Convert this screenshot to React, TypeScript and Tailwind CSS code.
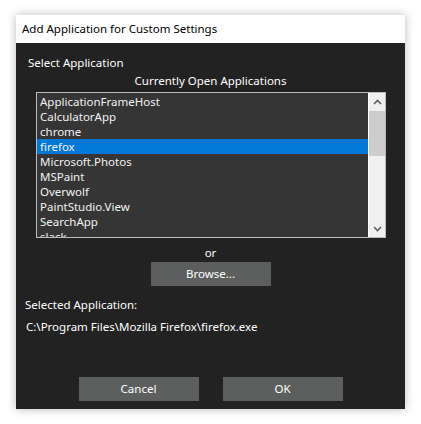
import React from 'react';

const apps = [
  'ApplicationFrameHost',
  'CalculatorApp',
  'chrome',
  'firefox',
  'Microsoft.Photos',
  'MSPaint',
  'Overwolf',
  'PaintStudio.View',
  'SearchApp',
  'slack',
  'Spotify',
];

function Chevron({ down }: { down?: boolean }) {
  return (
    <svg width="9" height="6" viewBox="0 0 9 6" className={down ? 'rotate-180' : ''} aria-hidden="true">
      <path d="M1 5 L4.5 1.5 L8 5" fill="none" stroke="#606060" strokeWidth="1.6" />
    </svg>
  );
}

function Button({ children }: { children: React.ReactNode }) {
  return (
    <button
      type="button"
      className="w-[120px] h-[24px] bg-[#5c5f5d] text-white text-[11.5px] leading-[24px] text-center"
    >
      {children}
    </button>
  );
}

export default function App() {
  const selected = 'firefox';

  return (
    <div
      className="min-h-[424px] bg-white pt-[15px] pl-[16px]"
      style={{ fontFamily: '"Noto Sans", sans-serif' }}
    >
      <div className="w-[389px] shadow-[0_0_9px_rgba(0,0,0,0.28)]">
        <div className="h-[28px] bg-white flex items-center pl-[6px] text-[11.5px] text-black">
          Add Application for Custom Settings
        </div>

        <div className="h-[366px] bg-[#222222] text-white text-[11.5px] leading-[15px] flex flex-col">
          <div className="mt-[12px] pl-[12px]">Select Application</div>
          <div className="mt-[3px] text-center">Currently Open Applications</div>

          <div className="mt-[4px] ml-[20px] w-[350px] h-[146px] border border-[#bcbcbc] bg-[#353535] flex">
            <div className="flex-1 overflow-hidden pt-[1px]">
              {apps.map((a) => (
                <div
                  key={a}
                  className={`h-[15px] pl-[3px] leading-[15px] whitespace-nowrap text-[#f2f2f2] ${
                    a === selected ? 'bg-[#0078d7]' : ''
                  }`}
                >
                  {a}
                </div>
              ))}
            </div>
            <div className="w-[17px] bg-[#f0f0f0] border-l border-white flex flex-col">
              <div className="h-[17px] flex items-center justify-center">
                <Chevron />
              </div>
              <div className="flex-1">
                <div className="mt-[1px] h-[45px] bg-[#cdcdcd]" />
              </div>
              <div className="h-[17px] flex items-center justify-center">
                <Chevron down />
              </div>
            </div>
          </div>

          <div className="mt-[7px] text-center">or</div>
          <div className="mt-[2px] flex justify-center">
            <Button>Browse...</Button>
          </div>

          <div className="mt-[11px] pl-[9px]">Selected Application:</div>
          <div className="mt-[7px] pl-[10px]">C:\Program Files\Mozilla Firefox\firefox.exe</div>

          <div className="mt-auto mb-[8px] flex justify-center gap-[24px]">
            <Button>Cancel</Button>
            <Button>OK</Button>
          </div>
        </div>
      </div>
    </div>
  );
}
